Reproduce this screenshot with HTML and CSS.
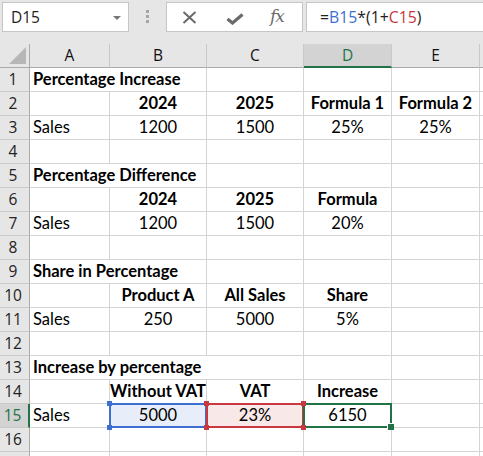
FILE: index.html
```html
<!DOCTYPE html>
<html>
<head>
<meta charset="utf-8">
<link rel="stylesheet" href="styles.css">
</head>
<body>
<div class="topbar">
  <div class="namebox"><span>D15</span><svg class="caret" width="8" height="4" viewBox="0 0 8 4"><polygon points="0,0 8,0 4,4" fill="#777"/></svg></div>
  <div class="grip"><i></i><i></i><i></i></div>
  <div class="fbtns">
    <svg class="ico" width="15" height="13" viewBox="0 0 15 13"><path d="M1.5 1 L13.5 12 M13.5 1 L1.5 12" stroke="#6a6a6a" stroke-width="2" fill="none"/></svg>
    <svg class="ico" width="18" height="12" viewBox="0 0 18 12"><path d="M1.5 6 L6.5 10 L16.5 1.5" stroke="#6a6a6a" stroke-width="3.2" fill="none"/></svg>
    <span class="fx">fx</span>
  </div>
  <div class="formula">=<span class="rb">B15</span>*(1+<span class="rr">C15</span>)</div>
</div>
<div class="sheet">
  <div class="corner"><svg width="17" height="17" viewBox="0 0 17 17"><polygon points="17,0 17,17 0,17" fill="#b7b7b7"/></svg></div>
  <div class="ch">A</div><div class="ch">B</div><div class="ch">C</div><div class="ch sel">D</div><div class="ch">E</div><div class="ch"></div>

  <div class="rh">1</div><div class="c b span2">Percentage Increase</div><div class="c"></div><div class="c"></div><div class="c"></div><div class="c"></div>
  <div class="rh">2</div><div class="c"></div><div class="c b m">2024</div><div class="c b m">2025</div><div class="c b m">Formula 1</div><div class="c b m">Formula 2</div><div class="c"></div>
  <div class="rh">3</div><div class="c">Sales</div><div class="c m">1200</div><div class="c m">1500</div><div class="c m">25%</div><div class="c m">25%</div><div class="c"></div>
  <div class="rh">4</div><div class="c"></div><div class="c"></div><div class="c"></div><div class="c"></div><div class="c"></div><div class="c"></div>
  <div class="rh">5</div><div class="c b span2">Percentage Difference</div><div class="c"></div><div class="c"></div><div class="c"></div><div class="c"></div>
  <div class="rh">6</div><div class="c"></div><div class="c b m">2024</div><div class="c b m">2025</div><div class="c b m">Formula</div><div class="c"></div><div class="c"></div>
  <div class="rh">7</div><div class="c">Sales</div><div class="c m">1200</div><div class="c m">1500</div><div class="c m">20%</div><div class="c"></div><div class="c"></div>
  <div class="rh">8</div><div class="c"></div><div class="c"></div><div class="c"></div><div class="c"></div><div class="c"></div><div class="c"></div>
  <div class="rh">9</div><div class="c b span2">Share in Percentage</div><div class="c"></div><div class="c"></div><div class="c"></div><div class="c"></div>
  <div class="rh">10</div><div class="c"></div><div class="c b m">Product A</div><div class="c b m">All Sales</div><div class="c b m">Share</div><div class="c"></div><div class="c"></div>
  <div class="rh">11</div><div class="c">Sales</div><div class="c m">250</div><div class="c m">5000</div><div class="c m">5%</div><div class="c"></div><div class="c"></div>
  <div class="rh">12</div><div class="c"></div><div class="c"></div><div class="c"></div><div class="c"></div><div class="c"></div><div class="c"></div>
  <div class="rh">13</div><div class="c b span3">Increase by percentage</div><div class="c"></div><div class="c"></div><div class="c"></div>
  <div class="rh">14</div><div class="c"></div><div class="c b m">Without VAT</div><div class="c b m">VAT</div><div class="c b m">Increase</div><div class="c"></div><div class="c"></div>
  <div class="rh selr">15</div><div class="c">Sales</div><div class="c m refb">5000<i class="h tl"></i><i class="h tr"></i><i class="h bl"></i><i class="h br"></i></div><div class="c m refr">23%<i class="h tl"></i><i class="h tr"></i><i class="h bl"></i><i class="h br"></i></div><div class="c m act">6150<i class="fill"></i></div><div class="c"></div><div class="c"></div>
  <div class="rh">16</div><div class="c"></div><div class="c"></div><div class="c"></div><div class="c"></div><div class="c"></div><div class="c"></div>
  <div class="rh"></div><div class="c"></div><div class="c"></div><div class="c"></div><div class="c"></div><div class="c"></div><div class="c"></div>
</div>
</body>
</html>
```
FILE: styles.css
```css
html, body {
  margin: 0;
  padding: 0;
}
body {
  width: 483px;
  height: 456px;
  overflow: hidden;
  background: #ffffff;
  font-family: Lato, "Open Sans", sans-serif;
  color: #000;
}
.topbar {
  height: 44px;
  box-sizing: border-box;
  background: #e6e6e6;
  display: flex;
  align-items: flex-start;
  padding: 2px 0 0 2px;
}
.namebox {
  width: 127px;
  height: 30px;
  box-sizing: border-box;
  border: 1px solid #c6c6c6;
  background: #fff;
  display: flex;
  align-items: center;
  justify-content: space-between;
  padding: 0 7px 0 8px;
  font-family: "Open Sans", sans-serif;
  font-size: 15.5px;
  color: #222;
}
.caret { display: block; margin-top: 1px; }
.grip {
  margin-left: 17px;
  margin-top: 8px;
  display: flex;
  flex-direction: column;
  gap: 2px;
}
.grip i {
  display: block;
  width: 3px;
  height: 3px;
  background: #a6a6a6;
}
.fbtns {
  margin-left: 17px;
  width: 137px;
  height: 30px;
  box-sizing: border-box;
  border: 1px solid #c6c6c6;
  background: #fff;
  display: flex;
  align-items: center;
  padding-left: 15px;
}
.fbtns .ico { display: block; }
.fbtns .ico:nth-child(1) { margin-top: 1px; }
.fbtns .ico:nth-child(2) { margin-left: 29px; margin-top: 3px; }
.fx {
  margin-left: 26px;
  font-family: "DejaVu Serif", "Liberation Serif", serif;
  font-style: italic;
  font-size: 17px;
  color: #6a6a6a;
  letter-spacing: -1px;
  margin-top: -2px;
}
.formula {
  margin-left: 3px;
  flex: 1;
  height: 30px;
  box-sizing: border-box;
  border: 1px solid #c6c6c6;
  border-right: none;
  background: #fff;
  padding-left: 13px;
  font-family: "Open Sans", sans-serif;
  font-size: 15.8px;
  line-height: 28px;
  color: #222;
}
.rb { color: #3d6fcf; }
.rr { color: #c8383f; }

.sheet {
  display: grid;
  grid-template-columns: 30px 80px 97px 97px 88px 88px 1fr;
  grid-auto-rows: 24px;
}
.corner, .ch, .rh {
  background: #e6e6e6;
  box-sizing: border-box;
}
.corner {
  border-right: 1px solid #ababab;
  border-bottom: 1px solid #ababab;
  display: flex;
  align-items: flex-end;
  padding: 0 0 3px 9px;
}
.corner svg { display: block; }
.ch {
  border-right: 1px solid #c9c9c9;
  border-bottom: 1px solid #ababab;
  text-align: center;
  font-family: "Open Sans", sans-serif;
  font-size: 15.5px;
  line-height: 23px;
  color: #111;
}
.ch.sel {
  background: #d3d3d3;
  color: #217346;
  border-bottom: 2px solid #217346;
}
.rh {
  border-right: 1px solid #ababab;
  border-bottom: 1px solid #c9c9c9;
  text-align: center;
  padding-right: 3px;
  font-family: "Open Sans", sans-serif;
  font-size: 15.5px;
  line-height: 23px;
  color: #222;
}
.rh.selr {
  background: #d3d3d3;
  color: #217346;
  border-right: 2px solid #217346;
}
.c {
  position: relative;
  box-sizing: border-box;
  border-right: 1px solid #d4d4d4;
  border-bottom: 1px solid #d4d4d4;
  font-size: 16.5px;
  line-height: 23px;
  padding: 0 3px;
  white-space: nowrap;
  overflow: visible;
}
.c.m { text-align: center; padding: 0; }
.c.b { font-weight: bold; }
.span2 { grid-column: span 2; }
.span3 { grid-column: span 3; }

.refb { background: #e8eef9; }
.refr { background: #f9e8e8; }
.refb::after, .refr::after, .act::after {
  content: "";
  position: absolute;
  left: -1px;
  top: -1px;
  right: -1px;
  bottom: -1px;
  border: 2px solid;
  pointer-events: none;
}
.refb::after { border-color: #3d6fcf; }
.refr::after { border-color: #c8383f; }
.act::after { border-color: #217346; }
.h {
  position: absolute;
  width: 5px;
  height: 5px;
  z-index: 2;
}
.refb .h { background: #3d6fcf; }
.refr .h { background: #c8383f; }
.h.tl { left: -3px; top: -3px; }
.h.tr { right: -3px; top: -3px; }
.h.bl { left: -3px; bottom: -3px; }
.h.br { right: -3px; bottom: -3px; }
.fill {
  position: absolute;
  right: -3px;
  bottom: -3px;
  width: 6px;
  height: 6px;
  background: #217346;
  border-left: 1px solid #fff;
  border-top: 1px solid #fff;
  box-sizing: content-box;
  z-index: 3;
}
```
